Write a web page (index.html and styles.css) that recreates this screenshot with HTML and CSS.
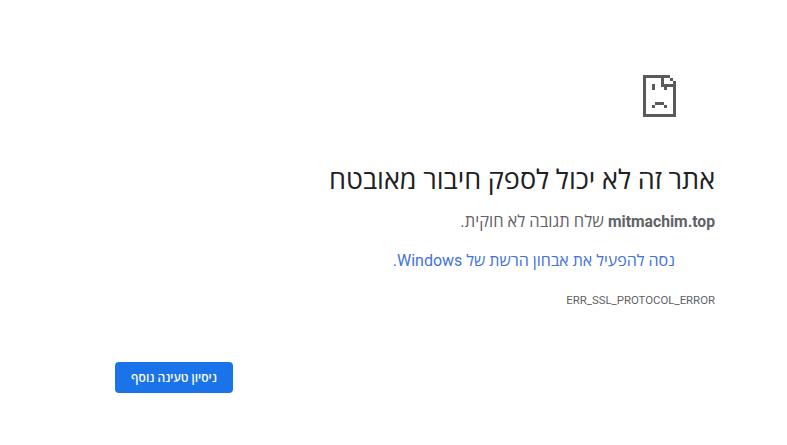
FILE: index.html
```html
<!DOCTYPE html>
<html lang="he" dir="rtl">
<head>
    <meta charset="UTF-8">
    <title>mitmachim.top</title>
    <link rel="stylesheet" href="styles.css">
</head>
<body>
    <div class="interstitial">
        <div class="icon">
            <svg width="33" height="42" viewBox="0 0 11 14" shape-rendering="crispEdges" fill="#5a5a5a">
                <rect x="0" y="0" width="9" height="1"/>
                <rect x="0" y="0" width="1" height="14"/>
                <rect x="0" y="13" width="11" height="1"/>
                <rect x="10" y="2" width="1" height="12"/>
                <rect x="6" y="0" width="1" height="4"/>
                <rect x="6" y="3" width="5" height="1"/>
                <rect x="9" y="1" width="1" height="1"/>
                <rect x="3" y="3" width="1" height="2"/>
                <rect x="7" y="4" width="1" height="1"/>
                <rect x="4" y="9" width="3" height="1"/>
                <rect x="3" y="10" width="1" height="1"/>
                <rect x="7" y="10" width="1" height="1"/>
            </svg>
        </div>
        <h1>אתר זה לא יכול לספק חיבור מאובטח</h1>
        <p class="summary"><strong>mitmachim.top</strong> שלח תגובה לא חוקית.</p>
        <p class="diagnose"><a href="#">נסה להפעיל את אבחון הרשת של Windows.</a></p>
        <div class="error-code">ERR_SSL_PROTOCOL_ERROR</div>
        <div class="actions">
            <button>ניסיון טעינה נוסף</button>
        </div>
    </div>
</body>
</html>
```

FILE: styles.css
```css
html, body {
    margin: 0;
    padding: 0;
    background: #fff;
}
body {
    font-family: Roboto, "Open Sans", "Noto Sans", sans-serif;
    font-size: 16px;
    color: #5f6368;
}
.interstitial {
    width: 600px;
    margin-right: 72px;
    padding-top: 75px;
}
.icon {
    height: 42px;
    padding-right: 39px;
    margin-bottom: 44px;
}
.icon svg {
    display: block;
}
h1 {
    margin: 0;
    font-size: 27px;
    font-weight: 400;
    line-height: 39px;
    color: #202124;
}
.summary {
    margin: 10px 0 0;
    font-size: 16.5px;
    line-height: 24px;
}
.summary strong {
    font-size: 15.7px;
}
.diagnose {
    margin: 15px 0 0;
    padding-right: 40px;
    line-height: 24px;
}
.diagnose a {
    color: #4272db;
    text-decoration: none;
}
.error-code {
    margin-top: 19px;
    font-size: 11.4px;
    line-height: 16px;
    direction: ltr;
    text-align: right;
}
.actions {
    margin-top: 54px;
    display: flex;
    justify-content: flex-end;
}
button {
    width: 118px;
    height: 31px;
    background: #1a73e8;
    color: #fff;
    border: none;
    border-radius: 4px;
    font-family: inherit;
    font-size: 12px;
    font-weight: 600;
    padding: 0;
}
```
